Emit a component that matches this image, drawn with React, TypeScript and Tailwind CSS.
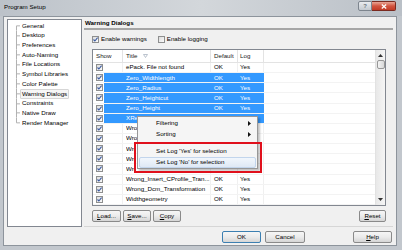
import React from 'react';

interface Row {
  title: string;
  selected?: boolean;
  // rows whose right part lies under the context menu
  clip?: 'menu' | 'box';
}

const rows: Row[] = [
  { title: 'ePack. File not found' },
  { title: 'Zero_Widthlength', selected: true },
  { title: 'Zero_Radius', selected: true },
  { title: 'Zero_Heightcut', selected: true },
  { title: 'Zero_Height', selected: true },
  { title: 'XRef_Not_Resolved', selected: true },
  { title: 'Wrong_Layer_Reference', clip: 'menu' },
  { title: 'Wrong_Symbol_Definition', clip: 'menu' },
  { title: 'Wrong_Units_In_File', clip: 'box' },
  { title: 'Wrong_Insert_Point', clip: 'box' },
  { title: 'Wrong_Profile_Direction', clip: 'box' },
  { title: 'Wrong_Insert_CProfile_Tran...' },
  { title: 'Wrong_Dcm_Transformation' },
  { title: 'Widthgeometry' },
];

const treeItems = [
  'General',
  'Desktop',
  'Preferences',
  'Auto-Naming',
  'File Locations',
  'Symbol Libraries',
  'Color Palette',
  'Warning Dialogs',
  'Constraints',
  'Native Draw',
  'Render Manager',
];

const CheckBox = ({ checked = true }: { checked?: boolean }) => (
  <span className="flex h-[7px] w-[7px] shrink-0 items-center justify-center border border-[#8e8f8f] bg-linear-to-br from-[#dcdcdc] to-[#fbfbfb]">
    {checked && (
      <svg width="5" height="5" viewBox="0 0 5 5">
        <path d="M0.5 2.5 L1.9 4 L4.6 0.6" fill="none" stroke="#3b5aa0" strokeWidth="1.1" />
      </svg>
    )}
  </span>
);

const Button = ({
  className,
  primary,
  children,
}: {
  className: string;
  primary?: boolean;
  children: React.ReactNode;
}) => (
  <div
    className={`flex h-[12px] items-center justify-center rounded-[2px] border bg-linear-to-b from-[#f6f6f6] via-[#ebebeb] to-[#d5d5d5] ${
      primary ? 'border-[#3c7fb1]' : 'border-[#8a8a8a]'
    } ${className}`}
  >
    {children}
  </div>
);

const Tree = () => (
  <div className="h-[208px] w-[75px] border border-[#828790] bg-white pt-[1px]">
    {treeItems.map((item, i) => {
      const last = i === treeItems.length - 1;
      const selected = item === 'Warning Dialogs';
      return (
        <div key={item} className="flex h-[9.7px] items-stretch">
          <svg width="12" height="9.7" viewBox="0 0 12 9.7" className="shrink-0">
            <path
              d={`M8.5 ${i === 0 ? 4.85 : 0} L8.5 ${last ? 4.85 : 9.7} M8.5 4.85 L12 4.85`}
              stroke="#b2b2b2"
              strokeWidth="1"
              fill="none"
            />
          </svg>
          <span
            className={`flex items-center whitespace-nowrap rounded-[1px] border px-[1px] ${
              selected ? 'border-[#d6d6d6] bg-[#f6f6f6]' : 'border-transparent'
            }`}
          >
            {item}
          </span>
        </div>
      );
    })}
  </div>
);

const Scrollbar = () => (
  <div className="flex w-[10px] flex-col border-l border-[#e2e2e2] bg-linear-to-r from-[#e8e8e8] to-[#f5f5f5]">
    <div className="flex h-[10px] items-center justify-center">
      <svg width="5" height="3" viewBox="0 0 5 3">
        <path d="M0 3 L2.5 0 L5 3 Z" fill="#333" />
      </svg>
    </div>
    <div className="mx-[0.5px] h-[9px] rounded-[2px] border border-[#979797] bg-linear-to-r from-[#f4f4f4] to-[#d8d8d8]" />
    <div className="flex-1" />
    <div className="flex h-[10px] items-center justify-center">
      <svg width="5" height="3" viewBox="0 0 5 3">
        <path d="M0 0 L2.5 3 L5 0 Z" fill="#333" />
      </svg>
    </div>
  </div>
);

const WarningTable = () => (
  <div className="mt-[6px] ml-[8px] flex w-[294px] border border-[#828790] bg-white">
    <div className="flex flex-1 flex-col">
      <div className="flex h-[13px] border-b border-[#e3e3e3] text-[#222]">
        <div className="flex w-[30px] items-center border-r border-[#e3e3e3] pl-[3px]">Show</div>
        <div className="flex w-[88px] items-center gap-[6px] border-r border-[#e3e3e3] pl-[3px]">
          Title
          <svg width="5" height="4" viewBox="0 0 5 4">
            <path d="M0.5 0.5 L4.5 0.5 L2.5 3.5 Z" fill="none" stroke="#a9b4c2" strokeWidth="0.8" />
          </svg>
        </div>
        <div className="flex w-[27px] items-center border-r border-[#e3e3e3] pl-[3px]">Default</div>
        <div className="flex w-[26px] items-center border-r border-[#e3e3e3] pl-[2px]">Log</div>
        <div className="flex-1" />
      </div>
      {rows.map((row) => {
        const cell = row.selected
          ? 'bg-[#3399ff] text-white border-[#3399ff]'
          : 'text-black border-[#f0f0f0]';
        return (
          <div key={row.title} className="flex h-[10.15px] border-b border-[#f3f3f3]">
            <div className="flex w-[30px]">
              <div className="flex w-[11px] items-center pl-[3px]">
                <CheckBox />
              </div>
              <div className={`flex-1 border-r ${cell}`} />
            </div>
            <div className={`flex w-[88px] items-center overflow-hidden whitespace-nowrap border-r pl-[3px] ${cell}`}>
              {row.clip === 'menu' && <span className="max-w-[11px] overflow-hidden">{row.title}</span>}
              {row.clip === 'box' && <span className="max-w-[8px] overflow-hidden">{row.title}</span>}
              {!row.clip && row.title}
            </div>
            <div className={`flex w-[27px] items-center border-r pl-[3px] ${cell}`}>{!row.clip && 'OK'}</div>
            <div className={`flex w-[26px] items-center border-r pl-[2px] ${cell}`}>{!row.clip && 'Yes'}</div>
            <div className="flex-1" />
          </div>
        );
      })}
    </div>
    <Scrollbar />
  </div>
);

const MenuArrow = () => (
  <svg width="3" height="5" viewBox="0 0 3 5">
    <path d="M0 0 L3 2.5 L0 5 Z" fill="#111" />
  </svg>
);

const MenuItem = ({ label, arrow, hover }: { label: string; arrow?: boolean; hover?: boolean }) => (
  <div
    className={`mx-[1px] flex h-[11px] items-center justify-between rounded-[2px] border pl-[16px] pr-[4px] ${
      hover ? 'border-[#c2d5ec] bg-linear-to-b from-[#f1f6fc] to-[#dfe9f5]' : 'border-transparent'
    }`}
  >
    <span className="whitespace-nowrap">{label}</span>
    {arrow && <MenuArrow />}
  </div>
);

export default function App() {
  return (
    <div className="relative h-[250px] w-[402px] overflow-hidden bg-[#c2c7cd] font-['Liberation_Sans',Arial,sans-serif] text-[6.2px] leading-none text-black">
      {/* title bar */}
      <div className="flex h-[16px] items-start justify-between bg-linear-to-r from-[#bcc2c9] via-[#d3d7db] to-[#bac0c7]">
        <span className="mt-[4px] ml-[4px] text-[6.2px]">Program Setup</span>
        <div className="mt-[1px] mr-[6px] flex">
          <div className="flex h-[10px] w-[14px] items-center justify-center rounded-l-[2px] border border-[#7d858e] bg-linear-to-b from-[#e9ecef] to-[#c3c9d0] text-[6px] font-bold text-[#6d7580]">
            ?
          </div>
          <div className="flex h-[10px] w-[24px] items-center justify-center rounded-r-[2px] border border-l-0 border-[#7a2a20] bg-linear-to-b from-[#e8a596] via-[#d25440] to-[#c13b26]">
            <svg width="6" height="5" viewBox="0 0 6 5">
              <path d="M0.8 0.6 L5.2 4.4 M5.2 0.6 L0.8 4.4" stroke="#fff" strokeWidth="1.3" />
            </svg>
          </div>
        </div>
      </div>

      {/* client area */}
      <div className="mr-[5px] ml-[3px] flex h-[230px] flex-col border border-[#8d949c] bg-[#f0f0f0]">
        <div className="flex pt-[2px] pl-[3px]">
          <Tree />
          <div className="ml-[2px] flex w-[309px] flex-col">
            <div className="flex h-[9px] items-center pl-[1px] font-bold">Warning Dialogs</div>
            <div className="h-[2px] bg-[#a6a6a6]" />
            <div className="mt-[6px] ml-[8px] flex h-[7px] items-center">
              <CheckBox />
              <span className="ml-[2px]">Enable warnings</span>
              <span className="ml-[11px]">
                <CheckBox checked={false} />
              </span>
              <span className="ml-[2px]">Enable logging</span>
            </div>
            <WarningTable />
            <div className="mt-[4px] ml-[8px] flex w-[294px] gap-[2px]">
              <Button className="w-[29px]">
                <span className="underline">L</span>oad...
              </Button>
              <Button className="w-[28px]">
                <span className="underline">S</span>ave...
              </Button>
              <Button className="w-[28px]">
                <span className="underline">C</span>opy
              </Button>
              <div className="flex-1" />
              <Button className="w-[27px]">
                <span className="underline">R</span>eset
              </Button>
            </div>
            <div className="mt-[4px] h-[1px] bg-[#d6d6d6]" />
          </div>
        </div>
        <div className="mt-[4px] flex pl-[218px]">
          <Button className="w-[39px]" primary>
            OK
          </Button>
          <Button className="ml-[4px] w-[40px]">Cancel</Button>
          <Button className="ml-[48px] w-[39px]">
            <span className="underline">H</span>elp
          </Button>
        </div>
      </div>

      {/* context menu */}
      <div className="absolute top-[116px] left-[137px] w-[121px] border border-[#979797] bg-[#f5f5f5] pt-[1px] shadow-[2px_2px_2px_rgba(0,0,0,0.25)]">
        <MenuItem label="Filtering" arrow />
        <MenuItem label="Sorting" arrow />
        <div className="flex h-[6px] items-center pl-[17px] pr-[1px]">
          <div className="h-[1px] flex-1 bg-[#e0e0e0]" />
        </div>
        <MenuItem label="Set Log 'Yes' for selection" />
        <MenuItem label="Set Log 'No' for selection" hover />
      </div>

      {/* red highlight */}
      <div className="absolute top-[142px] left-[134px] h-[31px] w-[128px] border-2 border-[#e0101c]" />
    </div>
  );
}
